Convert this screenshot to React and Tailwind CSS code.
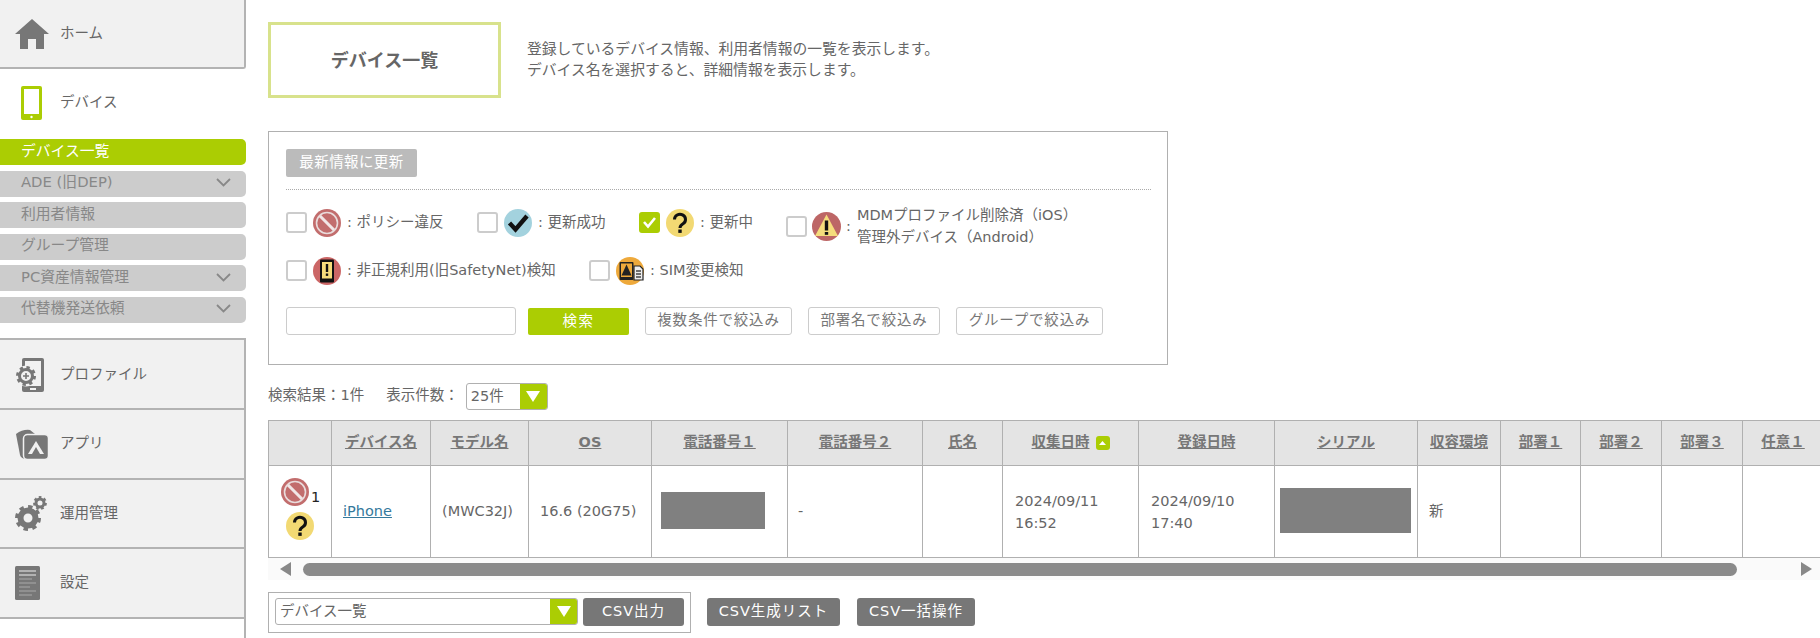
import React from 'react';

const columns = [
  { label: '', width: 'w-[63px]' },
  { label: 'デバイス名', width: 'w-[99px]' },
  { label: 'モデル名', width: 'w-[98px]' },
  { label: 'OS', width: 'w-[123px]' },
  { label: '電話番号１', width: 'w-[136px]' },
  { label: '電話番号２', width: 'w-[135px]' },
  { label: '氏名', width: 'w-[80px]' },
  { label: '収集日時', width: 'w-[136px]', sorted: true },
  { label: '登録日時', width: 'w-[136px]' },
  { label: 'シリアル', width: 'w-[143px]' },
  { label: '収容環境', width: 'w-[83px]' },
  { label: '部署１', width: 'w-[80px]' },
  { label: '部署２', width: 'w-[81px]' },
  { label: '部署３', width: 'w-[81px]' },
  { label: '任意１', width: 'w-[81px]' },
];

const subMenu = [
  { label: 'デバイス一覧', active: true },
  { label: 'ADE (旧DEP)', arrow: true },
  { label: '利用者情報' },
  { label: 'グループ管理' },
  { label: 'PC資産情報管理', arrow: true },
  { label: '代替機発送依頼', arrow: true },
];

const HomeIcon = () => (
  <svg width="34" height="30" viewBox="0 0 34 30" fill="#777">
    <polygon points="17,0 34,15 29,15 29,30 21,30 21,20 13,20 13,30 5,30 5,15 0,15" />
  </svg>
);

const DeviceIcon = () => (
  <svg width="21" height="34" viewBox="0 0 21 34">
    <rect width="21" height="34" rx="2" fill="#abcd03" />
    <rect x="3" y="3" width="15" height="25" fill="#fff" />
    <circle cx="10.5" cy="31" r="1.2" fill="#fff" />
  </svg>
);

const ProfileIcon = () => (
  <svg width="32" height="36" viewBox="0 0 32 36">
    <rect x="7" y="1" width="22" height="34" rx="2" fill="#777" />
    <rect x="10" y="4" width="16" height="25" fill="#f1f1f1" />
    <rect x="15" y="31" width="6" height="2" fill="#f1f1f1" />
    <circle cx="11" cy="19" r="10.5" fill="#f1f1f1" />
    <circle cx="11" cy="19" r="8.5" fill="none" stroke="#777" strokeWidth="3" strokeDasharray="3.3 3.4" />
    <circle cx="11" cy="19" r="6.5" fill="none" stroke="#777" strokeWidth="3" />
    <path d="M8 19h6M11 16v6" stroke="#777" strokeWidth="1.6" />
  </svg>
);

const AppIcon = () => (
  <svg width="34" height="31" viewBox="0 0 34 31">
    <path d="M1 5 Q8 0 15 1 L20 5 L12 30 Q6 30 5 26 Z" fill="#777" />
    <rect x="8.5" y="5.5" width="25" height="25" rx="4" fill="#777" stroke="#f1f1f1" strokeWidth="1.5" />
    <path d="M21 12 L29 25 H13 Z" fill="#f1f1f1" />
    <path d="M21 18 L25 25 H17 Z" fill="#777" />
  </svg>
);

const GearsIcon = () => (
  <svg width="32" height="35" viewBox="0 0 32 35">
    <circle cx="13" cy="22" r="11" fill="none" stroke="#777" strokeWidth="4" strokeDasharray="4.3 4.3" />
    <circle cx="13" cy="22" r="7.5" fill="none" stroke="#777" strokeWidth="6" />
    <circle cx="25" cy="7" r="5.6" fill="none" stroke="#777" strokeWidth="2.6" strokeDasharray="2.6 2.3" />
    <circle cx="25" cy="7" r="4" fill="none" stroke="#777" strokeWidth="3" />
  </svg>
);

const SettingsIcon = () => (
  <svg width="25" height="34" viewBox="0 0 25 34">
    <rect width="25" height="34" rx="1.5" fill="#777" />
    <path d="M4 5h17M4 9h17" stroke="#eee" strokeWidth="1.2" />
    <path d="M4 13h13M4 17h17M4 21h11M4 25h17M4 29h13" stroke="#aaa" strokeWidth="1.2" />
  </svg>
);

const BanIcon = () => (
  <svg width="28" height="28" viewBox="0 0 28 28" className="shrink-0">
    <circle cx="14" cy="14" r="14" fill="#c26d6d" />
    <circle cx="14" cy="14" r="10.5" fill="#c26d6d" stroke="#e9dcdc" strokeWidth="1.6" />
    <line x1="7" y1="7" x2="21" y2="21" stroke="#f1e6e6" strokeWidth="3" />
  </svg>
);

const CheckIcon = () => (
  <svg width="28" height="28" viewBox="0 0 28 28" className="shrink-0">
    <circle cx="14" cy="14" r="14" fill="#a3d2de" />
    <polyline points="5.5,14 11.5,20.5 23,7" fill="none" stroke="#111" strokeWidth="4.4" />
  </svg>
);

const QuestionIcon = () => (
  <svg width="28" height="28" viewBox="0 0 28 28" className="shrink-0">
    <circle cx="14" cy="14" r="14" fill="#f2d973" />
    <path d="M8.5 10.5 a5.5 5.2 0 1 1 8.5 4.3 c-2.2 1.4 -3 2 -3 4.2" fill="none" stroke="#111" strokeWidth="3" />
    <rect x="12.3" y="20.5" width="3.4" height="3.4" fill="#111" />
  </svg>
);

const WarnIcon = () => (
  <svg width="29" height="29" viewBox="0 0 29 29" className="shrink-0">
    <circle cx="14.5" cy="14.5" r="14.5" fill="#bd6666" />
    <polygon points="14.5,2.5 26,24 3,24" fill="#f5dc7c" />
    <path d="M14.5 8.5v10" stroke="#111" strokeWidth="3.4" />
    <rect x="12.8" y="20" width="3.4" height="2.8" fill="#111" />
  </svg>
);

const FraudIcon = () => (
  <svg width="28" height="28" viewBox="0 0 28 28" className="shrink-0">
    <circle cx="14" cy="14" r="14" fill="#cb6666" />
    <rect x="7" y="2.5" width="14" height="23" rx="1" fill="#111" />
    <rect x="9" y="5" width="10" height="16.5" fill="#f5dc7c" />
    <path d="M14 7v8" stroke="#111" strokeWidth="2.4" />
    <rect x="12.8" y="16.5" width="2.4" height="2.4" fill="#111" />
  </svg>
);

const SimIcon = () => (
  <svg width="28" height="28" viewBox="0 0 28 28" className="shrink-0">
    <circle cx="14" cy="14" r="14" fill="#eea93b" />
    <rect x="3.5" y="5" width="14" height="18" rx="1" fill="#222" />
    <rect x="5" y="6.5" width="11" height="13.5" fill="#eea93b" />
    <polygon points="10.5,7.5 15.5,18.5 5.5,18.5" fill="#222" />
    <path d="M18 9h6l3 3v11h-9z" fill="#eee" stroke="#222" strokeWidth="1.2" />
    <path d="M20 14h5M20 17h5M20 20h5" stroke="#444" strokeWidth="1.4" />
  </svg>
);

const Chevron = () => (
  <svg width="15" height="9" viewBox="0 0 15 9" className="ml-auto mr-[15px]">
    <polyline points="1,1 7.5,7.5 14,1" fill="none" stroke="#888" strokeWidth="1.8" />
  </svg>
);

const Checkbox = ({ checked }) => (
  <span className={`flex size-[21px] shrink-0 items-center justify-center rounded-[3px] border-2 ${checked ? 'border-[#abcd03] bg-[#abcd03]' : 'border-[#ccc] bg-white'}`}>
    {checked && (
      <svg width="15" height="13" viewBox="0 0 15 13">
        <polyline points="2,6 6,10.5 13,2" fill="none" stroke="#fff" strokeWidth="2.6" />
      </svg>
    )}
  </span>
);

const Legend = ({ icon, checked, children, className }) => (
  <div className={`flex h-[29px] shrink-0 items-center ${className}`}>
    <Checkbox checked={checked} />
    <span className="ml-[6px] mr-[6px]">{icon}</span>
    <span className="whitespace-nowrap">{children}</span>
  </div>
);

const SelectBox = ({ label, className }) => (
  <div className={`flex overflow-hidden rounded-[3px] border border-[#b0b0b0] bg-white ${className}`}>
    <span className="flex-1 pl-[4px] leading-[25px]">{label}</span>
    <span className="flex w-[27px] items-center justify-center bg-[#abcd03]">
      <svg width="14" height="11" viewBox="0 0 14 11">
        <polygon points="0,0 14,0 7,11" fill="#fff" />
      </svg>
    </span>
  </div>
);

const NavItem = ({ icon, label, className }) => (
  <div className={`flex items-center border-r-2 border-b-2 border-[#b3b3b3] bg-[#f1f1f1] ${className}`}>
    <span className="flex w-[60px] justify-start pl-[15px]">{icon}</span>
    <span>{label}</span>
  </div>
);

const OutlineButton = ({ children, className }) => (
  <button className={`h-[28px] rounded-[3px] border border-[#ccc] bg-white tracking-[0.8px] text-[#777] ${className}`}>{children}</button>
);

const DarkButton = ({ children, className }) => (
  <button className={`h-[28px] rounded-[3px] bg-[#777] tracking-[1px] text-white ${className}`}>{children}</button>
);

export default function App() {
  return (
    <div className="flex h-[638px] w-[1820px] overflow-hidden bg-white font-['DejaVu_Sans','Noto_Sans_CJK_JP',sans-serif] text-[14.5px] text-[#666]">
      {/* サイドメニュー */}
      <aside className="flex w-[246px] shrink-0 flex-col">
        <NavItem className="h-[69px] rounded-br-[3px]" icon={<HomeIcon />} label="ホーム" />
        <div className="h-[269px]">
          <div className="mb-[2px] flex h-[68px] items-center">
            <span className="flex w-[60px] pl-[21px]"><DeviceIcon /></span>
            <span>デバイス</span>
          </div>
          <ul className="flex flex-col gap-[5.5px]">
            {subMenu.map((item) => (
              <li
                key={item.label}
                className={`flex h-[26px] items-center rounded-r-[5px] pb-[2px] pl-[21px] text-[14.8px] ${item.active ? 'bg-[#abcd03] text-white' : 'bg-[#ccc] text-[#888]'}`}
              >
                {item.label}
                {item.arrow && <Chevron />}
              </li>
            ))}
          </ul>
        </div>
        <NavItem className="h-[72px] border-t-2 pt-[1px]" icon={<ProfileIcon />} label="プロファイル" />
        <NavItem className="h-[70px]" icon={<AppIcon />} label="アプリ" />
        <NavItem className="h-[69px]" icon={<GearsIcon />} label="運用管理" />
        <NavItem className="h-[70px]" icon={<SettingsIcon />} label="設定" />
        <div className="flex-1 border-r-2 border-[#b3b3b3]" />
      </aside>

      {/* メイン */}
      <main className="min-w-0 flex-1 pl-[22px]">
        <div className="mt-[22px] flex items-center">
          <h1 className="flex h-[76px] w-[233px] items-center justify-center border-[3px] border-[#d8e28c] text-[18px] font-bold">デバイス一覧</h1>
          <p className="mb-[2px] ml-[26px] text-[14.8px] leading-[21px]">
            登録しているデバイス情報、利用者情報の一覧を表示します。<br />
            デバイス名を選択すると、詳細情報を表示します。
          </p>
        </div>

        <section className="mt-[33px] h-[234px] w-[900px] border border-[#b0b0b0] pl-[17px] pt-[17px]">
          <button className="h-[28px] w-[131px] rounded-[2px] bg-[#bbb] tracking-[0.4px] text-white">最新情報に更新</button>
          <div className="mt-[12px] w-[865px] border-b border-dotted border-[#aaa]" />

          <div className="mt-[18px] flex items-start">
            <Legend className="w-[191px]" icon={<BanIcon />}>: ポリシー違反</Legend>
            <Legend className="w-[162px]" icon={<CheckIcon />}>: 更新成功</Legend>
            <Legend className="w-[147px]" checked icon={<QuestionIcon />}>: 更新中</Legend>
            <div className="-mt-[4px] flex h-[45px] items-center">
              <Checkbox />
              <span className="ml-[5px]"><WarnIcon /></span>
              <span className="ml-[5px] mr-[6px]">:</span>
              <span className="mb-[2px] leading-[22px]">MDMプロファイル削除済（iOS）<br />管理外デバイス（Android）</span>
            </div>
          </div>

          <div className="mt-[7px] flex">
            <Legend className="w-[303px]" icon={<FraudIcon />}>: 非正規利用(旧SafetyNet)検知</Legend>
            <Legend icon={<SimIcon />}>: SIM変更検知</Legend>
          </div>

          <div className="mt-[22px] flex items-end">
            <input className="h-[28px] w-[230px] rounded-[3px] border border-[#ccc] bg-white" />
            <button className="ml-[12px] h-[27px] w-[101px] rounded-[2px] bg-[#abcd03] tracking-[1.4px] text-white">検索</button>
            <OutlineButton className="ml-[16px] w-[147px]">複数条件で絞込み</OutlineButton>
            <OutlineButton className="ml-[16px] w-[132px]">部署名で絞込み</OutlineButton>
            <OutlineButton className="ml-[16px] w-[147px]">グループで絞込み</OutlineButton>
          </div>
        </section>

        <div className="mt-[18px] flex h-[26px] items-center">
          <span>検索結果：1件</span>
          <span className="ml-[22px]">表示件数：</span>
          <SelectBox label="25件" className="ml-[7px] h-[27px] w-[82px]" />
        </div>

        <div className="mt-[11px] overflow-hidden">
          <table className="w-[1555px] table-fixed border-collapse">
            <colgroup>
              {columns.map((col, i) => <col key={i} className={col.width} />)}
            </colgroup>
            <thead>
              <tr className="h-[45px] bg-[#e4e4e4]">
                {columns.map((col, i) => (
                  <th key={i} className="whitespace-nowrap border border-[#b0b0b0] p-0 text-center font-bold text-[#777]">
                    <span className="underline">{col.label}</span>
                    {col.sorted && (
                      <span className="ml-[6px] inline-flex h-[14px] w-[14px] items-center justify-center rounded-[3px] bg-[#abcd03] align-[2px]">
                        <svg width="7" height="4" viewBox="0 0 7 4"><polygon points="3.5,0 7,4 0,4" fill="#fff" /></svg>
                      </span>
                    )}
                  </th>
                ))}
              </tr>
            </thead>
            <tbody>
              <tr className="h-[92px]">
                <td className="border border-[#b0b0b0] p-0">
                  <div className="mb-[6px] flex flex-col pl-[12px]">
                    <div className="flex items-end">
                      <BanIcon />
                      <span className="ml-[2px] text-[14.5px] leading-[18px] text-[#222]">1</span>
                    </div>
                    <div className="ml-[5px] mt-[6px]"><QuestionIcon /></div>
                  </div>
                </td>
                <td className="border border-[#b0b0b0] p-0 pl-[11px]"><a className="text-[#35799c] underline">iPhone</a></td>
                <td className="border border-[#b0b0b0] p-0 pl-[11px]">(MWC32J)</td>
                <td className="whitespace-nowrap border border-[#b0b0b0] p-0 pl-[11px]">16.6 (20G75)</td>
                <td className="border border-[#b0b0b0] p-0 pl-[9px]"><div className="mb-[2px] h-[37px] w-[104px] bg-[#808080]" /></td>
                <td className="border border-[#b0b0b0] p-0 pl-[10px]">-</td>
                <td className="border border-[#b0b0b0] p-0" />
                <td className="border border-[#b0b0b0] p-0 pl-[12px] leading-[22px]">2024/09/11<br />16:52</td>
                <td className="border border-[#b0b0b0] p-0 pl-[12px] leading-[22px]">2024/09/10<br />17:40</td>
                <td className="border border-[#b0b0b0] p-0 pl-[5px]"><div className="mb-[2px] h-[45px] w-[131px] bg-[#808080]" /></td>
                <td className="border border-[#b0b0b0] p-0 pl-[11px]">新</td>
                <td className="border border-[#b0b0b0] p-0" />
                <td className="border border-[#b0b0b0] p-0" />
                <td className="border border-[#b0b0b0] p-0" />
                <td className="border border-[#b0b0b0] p-0" />
              </tr>
            </tbody>
          </table>
        </div>

        <div className="flex h-[22px] items-center bg-[#fafafa] pl-[12px]">
          <svg width="11" height="14" viewBox="0 0 11 14"><polygon points="11,0 11,14 0,7" fill="#888" /></svg>
          <div className="ml-[12px] h-[13px] w-[1434px] rounded-full bg-[#8a8a8a]" />
          <svg width="11" height="14" viewBox="0 0 11 14" className="ml-[64px]"><polygon points="0,0 0,14 11,7" fill="#888" /></svg>
        </div>

        <div className="mt-[12px] flex items-start">
          <div className="flex h-[41px] w-[423px] items-start border border-[#b0b0b0] pl-[6px] pt-[5px]">
            <SelectBox label="デバイス一覧" className="h-[27px] w-[303px]" />
            <DarkButton className="ml-[5px] w-[101px]">CSV出力</DarkButton>
          </div>
          <DarkButton className="ml-[16px] mt-[6px] w-[133px]">CSV生成リスト</DarkButton>
          <DarkButton className="ml-[17px] mt-[6px] w-[118px]">CSV一括操作</DarkButton>
        </div>
      </main>
    </div>
  );
}
